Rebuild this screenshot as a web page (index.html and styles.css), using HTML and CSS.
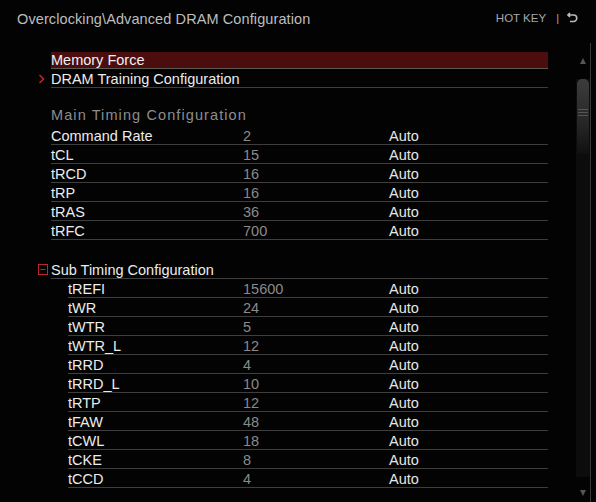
FILE: index.html
```html
<!DOCTYPE html>
<html>
<head>
<meta charset="utf-8">
<link rel="stylesheet" href="styles.css">
</head>
<body>
<header class="top">
  <div class="title">Overclocking\Advanced DRAM Configuration</div>
  <div class="hotkey">
    <span>HOT KEY</span>
    <span class="sep">|</span>
    <svg class="back" width="11" height="11" viewBox="0 0 11 11"><path d="M3 1 L1 3 L3 5 M1 3 H6.5 A3 3 0 0 1 6.5 9.5 H3" fill="none" stroke="#bbb" stroke-width="1.6"/></svg>
  </div>
</header>
<main class="panel">
  <div class="list">
    <div class="row sel"><span class="label">Memory Force</span></div>
    <div class="row link">
      <svg class="chev" width="8" height="10" viewBox="0 0 8 10"><path d="M1.5 1 L5.5 5 L1.5 9" fill="none" stroke="#c0232b" stroke-width="1.6"/></svg>
      <span class="label">DRAM Training Configuration</span>
    </div>
    <div class="row head"><span class="label">Main Timing Configuration</span></div>
    <div class="row"><span class="label">Command Rate</span><span class="val">2</span><span class="opt">Auto</span></div>
    <div class="row"><span class="label">tCL</span><span class="val">15</span><span class="opt">Auto</span></div>
    <div class="row"><span class="label">tRCD</span><span class="val">16</span><span class="opt">Auto</span></div>
    <div class="row"><span class="label">tRP</span><span class="val">16</span><span class="opt">Auto</span></div>
    <div class="row"><span class="label">tRAS</span><span class="val">36</span><span class="opt">Auto</span></div>
    <div class="row"><span class="label">tRFC</span><span class="val">700</span><span class="opt">Auto</span></div>
    <div class="row group">
      <svg class="box" width="10" height="11" viewBox="0 0 10 11"><rect x="0.5" y="0.5" width="9" height="10" fill="none" stroke="#c0232b"/><path d="M2.5 5.5 H7.5" stroke="#c0232b" stroke-width="1"/></svg>
      <span class="label">Sub Timing Configuration</span>
    </div>
    <div class="row sub"><span class="label">tREFI</span><span class="val">15600</span><span class="opt">Auto</span></div>
    <div class="row sub"><span class="label">tWR</span><span class="val">24</span><span class="opt">Auto</span></div>
    <div class="row sub"><span class="label">tWTR</span><span class="val">5</span><span class="opt">Auto</span></div>
    <div class="row sub"><span class="label">tWTR_L</span><span class="val">12</span><span class="opt">Auto</span></div>
    <div class="row sub"><span class="label">tRRD</span><span class="val">4</span><span class="opt">Auto</span></div>
    <div class="row sub"><span class="label">tRRD_L</span><span class="val">10</span><span class="opt">Auto</span></div>
    <div class="row sub"><span class="label">tRTP</span><span class="val">12</span><span class="opt">Auto</span></div>
    <div class="row sub"><span class="label">tFAW</span><span class="val">48</span><span class="opt">Auto</span></div>
    <div class="row sub"><span class="label">tCWL</span><span class="val">18</span><span class="opt">Auto</span></div>
    <div class="row sub"><span class="label">tCKE</span><span class="val">8</span><span class="opt">Auto</span></div>
    <div class="row sub"><span class="label">tCCD</span><span class="val">4</span><span class="opt">Auto</span></div>
  </div>
  <div class="scroll">
    <div class="arrow up"></div>
    <div class="track">
      <div class="thumb"><div class="grip"></div></div>
    </div>
    <div class="arrow down"></div>
  </div>
</main>
</body>
</html>
```
FILE: styles.css
```css
* { box-sizing: border-box; }
html, body { margin: 0; padding: 0; }
body {
  width: 596px;
  height: 502px;
  background: #030303;
  font-family: "Liberation Sans", Arial, sans-serif;
  color: #e6e6e6;
  overflow: hidden;
}
.top {
  height: 43px;
  display: flex;
  align-items: flex-start;
  justify-content: space-between;
  padding: 11px 18px 0 17px;
}
.title {
  font-size: 14.5px;
  color: #bdbdbd;
  letter-spacing: 0.1px;
}
.hotkey {
  display: flex;
  align-items: center;
  gap: 8px;
  font-size: 11.5px;
  color: #a8a8a8;
  padding-top: 1px;
}
.hotkey .sep { margin-left: 2px; font-size: 11px; }
.back { margin-top: -1px; }
.panel {
  display: flex;
  height: 459px;
}
.list {
  width: 548px;
  padding: 7px 0 0 51px;
  display: flex;
  flex-direction: column;
}
.row {
  position: relative;
  height: 19px;
  display: flex;
  align-items: center;
  padding-top: 1px;
  border-bottom: 1px solid #3e3e3e;
  font-size: 14.5px;
  line-height: 16px;
}
.row .label { width: 192px; color: #ececec; white-space: nowrap; }
.row .val { width: 146px; color: #8a8a8a; }
.row .opt { color: #e6e6e6; }
.row.sel {
  padding-top: 2px;
  background: #4c0d0f;
  background-clip: content-box;
  border-bottom-color: #5a5a50;
}
.row.sel .label { color: #f0f0f0; }
.chev { position: absolute; left: -13px; top: 5px; }
.row.head {
  margin-top: 19px;
  border-bottom: none;
}
.row.head .label {
  color: #8d8d8d;
  letter-spacing: 1.1px;
  width: auto;
  margin-top: -4px;
}
.row.group { margin-top: 20px; }
.row.group .label { width: auto; }
.box { position: absolute; left: -13px; top: 4px; }
.row.sub { margin-left: 17px; }
.row.sub .label { width: 175px; }
.scroll {
  margin-left: 27px;
  width: 16px;
  border-right: 1px solid #3a3a3a;
  display: flex;
  flex-direction: column;
  align-items: center;
}
.arrow { width: 0; height: 0; border-left: 3px solid transparent; border-right: 3px solid transparent; }
.arrow.up { margin-top: 15px; border-bottom: 6px solid #555; }
.arrow.down { margin-top: 13px; border-top: 6px solid #555; }
.track {
  margin-top: 15px;
  width: 14px;
  height: 398px;
  background: #0c0c0c;
}
.thumb {
  width: 12px;
  margin: 0 auto;
  height: 75px;
  border-radius: 5px 5px 0 0;
  background: linear-gradient(#3c3c3c, #262626 60%, #101010);
  padding-top: 30px;
}
.grip {
  height: 9px;
  margin: 0 1px;
  background: repeating-linear-gradient(#555 0 1px, transparent 1px 3px);
}
```
